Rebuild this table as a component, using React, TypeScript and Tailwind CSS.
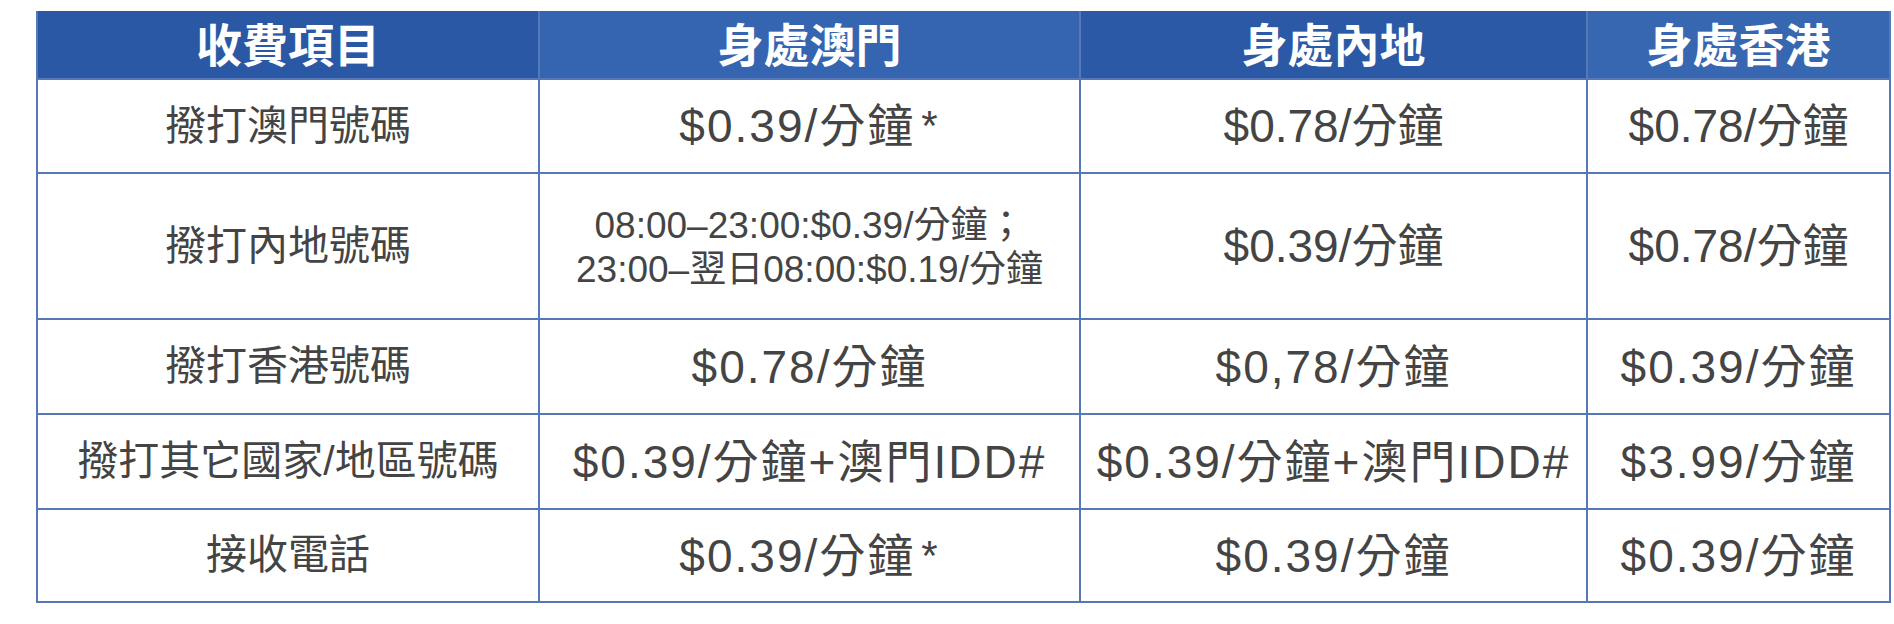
import React from 'react';

type Cell = { text: React.ReactNode; spaced?: boolean };

const headers = ['收費項目', '身處澳門', '身處內地', '身處香港'];
const headerBg = ['bg-[#2a58a5]', 'bg-[#3565b0]', 'bg-[#2b59a6]', 'bg-[#3767b1]'];

const rows: { label: string; cells: Cell[] }[] = [
    {
        label: '撥打澳門號碼',
        cells: [
            { text: <>$0.39/分鐘<span className="text-[42px] align-top ml-[6px]">*</span></>, spaced: true },
            { text: '$0.78/分鐘' },
            { text: '$0.78/分鐘' },
        ],
    },
    {
        label: '撥打內地號碼',
        cells: [
            {
                text: (
                    <div className="text-[37px] leading-[44px] tracking-normal pt-[4px]">
                        <div>08:00–23:00:$0.39/分鐘；</div>
                        <div>23:00–翌日08:00:$0.19/分鐘</div>
                    </div>
                ),
            },
            { text: '$0.39/分鐘' },
            { text: '$0.78/分鐘' },
        ],
    },
    {
        label: '撥打香港號碼',
        cells: [
            { text: '$0.78/分鐘', spaced: true },
            { text: '$0,78/分鐘', spaced: true },
            { text: '$0.39/分鐘', spaced: true },
        ],
    },
    {
        label: '撥打其它國家/地區號碼',
        cells: [
            { text: '$0.39/分鐘+澳門IDD#', spaced: true },
            { text: '$0.39/分鐘+澳門IDD#', spaced: true },
            { text: '$3.99/分鐘', spaced: true },
        ],
    },
    {
        label: '接收電話',
        cells: [
            { text: <>$0.39/分鐘<span className="text-[42px] align-top ml-[6px]">*</span></>, spaced: true },
            { text: '$0.39/分鐘', spaced: true },
            { text: '$0.39/分鐘', spaced: true },
        ],
    },
];

export default function App() {
    return (
        <div
            className="w-[1894px] h-[624px] bg-white pl-[36px] pt-[11px]"
            style={{ fontFamily: '"Liberation Sans", "Noto Sans CJK TC", sans-serif' }}
        >
            <div className="inline-grid grid-cols-[500px_539px_505px_301px] grid-rows-[67px_92px_144px_93px_93px_91px] gap-[2px] p-[2px] pt-0 bg-[#5677b8]">
                {headers.map((h, i) => (
                    <div
                        key={h}
                        className={`${headerBg[i]} flex items-center justify-center text-white font-bold text-[46px] leading-none pt-[2px]`}
                    >
                        {h}
                    </div>
                ))}
                {rows.map((row) => (
                    <React.Fragment key={row.label}>
                        <div className="bg-white flex items-center justify-center text-[41px] text-[#444444] leading-none">
                            {row.label}
                        </div>
                        {row.cells.map((c, j) => (
                            <div
                                key={j}
                                className={`bg-white flex items-center justify-center text-center text-[46px] text-[#444444] leading-none ${
                                    c.spaced ? 'tracking-[2px]' : 'tracking-normal'
                                }`}
                            >
                                {c.text}
                            </div>
                        ))}
                    </React.Fragment>
                ))}
            </div>
        </div>
    );
}
